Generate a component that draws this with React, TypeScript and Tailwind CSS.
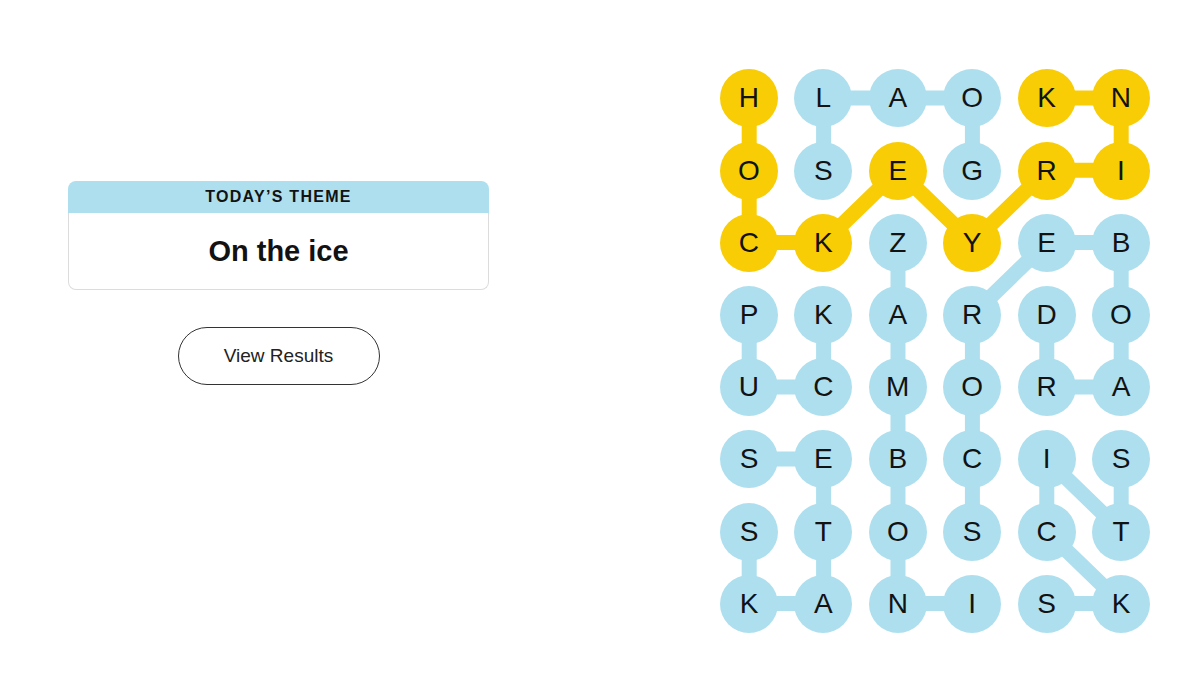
import React from "react";

const GRID = [
  "HLAOKN",
  "OSEGRI",
  "CKZYEB",
  "PKARDO",
  "UCMORA",
  "SEBCIS",
  "STOSCT",
  "KANISK",
];

const CW = 74.4;
const CH = 72.2;
const W = CW * 6;
const H = CH * 8;

type P = [number, number];

const YELLOW: P[] = [
  [0, 0], [1, 0], [2, 0], [2, 1], [1, 2], [2, 3], [1, 4], [1, 5], [0, 5], [0, 4],
];

const BLUE_PATHS: P[][] = [
  [[1, 1], [0, 1], [0, 2], [0, 3], [1, 3]],
  [[2, 2], [3, 2], [4, 2], [5, 2], [6, 2], [7, 2], [7, 3]],
  [[6, 3], [5, 3], [4, 3], [3, 3], [2, 4], [2, 5], [3, 5], [4, 5], [4, 4], [3, 4]],
  [[3, 0], [4, 0], [4, 1], [3, 1]],
  [[5, 0], [5, 1], [6, 1], [7, 1], [7, 0], [6, 0]],
  [[5, 5], [6, 5], [5, 4], [6, 4], [7, 5], [7, 4]],
];

const isYellow = (r: number, c: number) => YELLOW.some(([a, b]) => a === r && b === c);

const pt = ([r, c]: P) => `${(c + 0.5) * CW},${(r + 0.5) * CH}`;

export default function App() {
  return (
    <div className="w-[1200px] h-[675px] bg-white flex overflow-hidden" style={{ fontFamily: '"Liberation Sans", Arial, sans-serif' }}>
      <div className="w-[489px] pl-[68px] pt-[181px] flex flex-col items-center shrink-0">
        <div className="w-[421px]">
          <div className="h-[32px] bg-[#aedfee] rounded-t-[8px] flex items-center justify-center">
            <span className="text-[16px] font-bold tracking-[1.3px] text-[#121212] leading-none">TODAY’S THEME</span>
          </div>
          <div className="h-[77px] border-x border-b border-[#dcdcdc] rounded-b-[8px] flex items-center justify-center">
            <span className="text-[29px] font-bold text-[#121212] leading-none">On the ice</span>
          </div>
        </div>
        <button className="mt-[37px] w-[202px] h-[58px] rounded-full border border-[#333333] bg-white flex items-center justify-center text-[19px] text-[#222222]">
          View Results
        </button>
      </div>
      <div className="ml-[222.8px] mt-[62.4px] relative w-[446.4px] h-[577.6px] shrink-0">
        <svg className="absolute inset-0" width={W} height={H} viewBox={`0 0 ${W} ${H}`}>
          {BLUE_PATHS.map((p, i) => (
            <polyline key={i} points={p.map(pt).join(" ")} fill="none" stroke="#aedfee" strokeWidth={15} strokeLinejoin="round" />
          ))}
          <polyline points={YELLOW.map(pt).join(" ")} fill="none" stroke="#f8cd05" strokeWidth={15} strokeLinejoin="round" />
        </svg>
        <div className="relative grid grid-cols-6 grid-rows-8 w-full h-full">
          {GRID.flatMap((row, r) =>
            row.split("").map((ch, c) => (
              <div key={`${r}-${c}`} className="flex items-center justify-center">
                <div
                  className={`w-[58px] h-[58px] rounded-full flex items-center justify-center text-[28px] text-[#121212] leading-none ${
                    isYellow(r, c) ? "bg-[#f8cd05]" : "bg-[#aedfee]"
                  }`}
                >
                  {ch}
                </div>
              </div>
            ))
          )}
        </div>
      </div>
    </div>
  );
}
